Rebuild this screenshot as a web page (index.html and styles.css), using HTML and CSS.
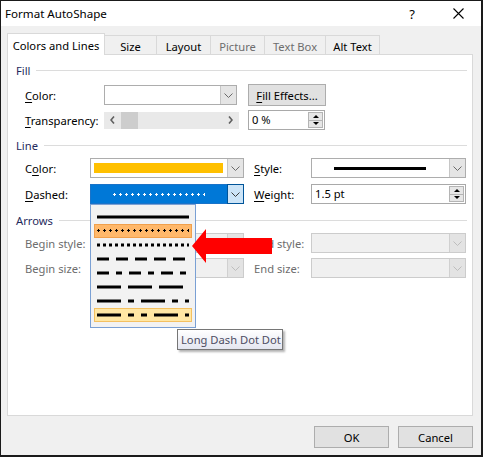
FILE: index.html
```html
<!DOCTYPE html>
<html lang="en">
<head>
<meta charset="utf-8">
<title>Format AutoShape</title>
<link rel="stylesheet" href="styles.css">
</head>
<body>
<div class="window">
  <div class="titlebar">
    <span class="title">Format AutoShape</span>
    <span class="tb-btn help">?</span>
    <span class="tb-btn close"><svg width="11" height="11" viewBox="0 0 11 11"><path d="M0.5 0.5L10.5 10.5M10.5 0.5L0.5 10.5" stroke="#000" stroke-width="1.1"/></svg></span>
  </div>

  <div class="tabs">
    <div class="tab active">Colors and Lines</div>
    <div class="tab t-size">Size</div>
    <div class="tab t-layout">Layout</div>
    <div class="tab t-picture disabled">Picture</div>
    <div class="tab t-textbox disabled">Text Box</div>
    <div class="tab t-alt">Alt Text</div>
  </div>

  <div class="panel">
    <div class="group-head g-fill"><span>Fill</span></div>
    <div class="row r1">
      <span class="lbl lbl-fill"><u>C</u>olor:</span>
      <div class="combo c133"><div class="field"></div><div class="drop"><svg class="chev" width="9" height="5" viewBox="0 0 9 5"><polyline points="0.5,0.5 4.5,4.5 8.5,0.5" fill="none" stroke="#6a6a6a" stroke-width="1"/></svg></div></div>
      <div class="btn fill-effects"><span><u>F</u>ill Effects...</span></div>
    </div>
    <div class="row r2">
      <span class="lbl lbl-fill"><u>T</u>ransparency:</span>
      <div class="scroll">
        <div class="sbtn"><svg width="5" height="8" viewBox="0 0 5 8"><polyline points="4,0.5 1,4 4,7.5" fill="none" stroke="#606060" stroke-width="1.6"/></svg></div>
        <div class="thumb"></div>
        <div class="strack"></div>
        <div class="sbtn"><svg width="5" height="8" viewBox="0 0 5 8"><polyline points="1,0.5 4,4 1,7.5" fill="none" stroke="#606060" stroke-width="1.6"/></svg></div>
      </div>
      <div class="spin s77"><span class="spin-val">0 %</span><div class="spin-btns"><div class="sb"><i class="up"></i></div><div class="sb"><i class="down"></i></div></div></div>
    </div>

    <div class="group-head g-line"><span>Line</span></div>
    <div class="row r3">
      <span class="lbl lbl-line">C<u>o</u>lor:</span>
      <div class="combo c154"><div class="field"><div class="swatch"></div></div><div class="drop"><svg class="chev" width="9" height="5" viewBox="0 0 9 5"><polyline points="0.5,0.5 4.5,4.5 8.5,0.5" fill="none" stroke="#6a6a6a" stroke-width="1"/></svg></div></div>
      <span class="lbl lbl-right"><u>S</u>tyle:</span>
      <div class="combo c155"><div class="field center"><div class="solid"></div></div><div class="drop"><svg class="chev" width="9" height="5" viewBox="0 0 9 5"><polyline points="0.5,0.5 4.5,4.5 8.5,0.5" fill="none" stroke="#6a6a6a" stroke-width="1"/></svg></div></div>
    </div>
    <div class="row r4">
      <span class="lbl lbl-line"><u>D</u>ashed:</span>
      <div class="combo c154 open"><div class="field center">
        <svg width="92" height="7" viewBox="0 0 92 7"><defs><pattern id="pw" x="0" y="0" width="6" height="7" patternUnits="userSpaceOnUse"><rect x="0" y="3" width="3" height="1" fill="#fff"/><rect x="1" y="2" width="1" height="3" fill="#fff"/></pattern></defs><rect x="0" y="0" width="92" height="7" fill="url(#pw)"/></svg>
      </div><div class="drop"><svg class="chev" width="9" height="5" viewBox="0 0 9 5"><polyline points="0.5,0.5 4.5,4.5 8.5,0.5" fill="none" stroke="#3a3a3a" stroke-width="1"/></svg></div></div>
      <span class="lbl lbl-right"><u>W</u>eight:</span>
      <div class="spin s155"><span class="spin-val">1.5 pt</span><div class="spin-btns"><div class="sb"><i class="up"></i></div><div class="sb"><i class="down"></i></div></div></div>
    </div>

    <div class="group-head g-arrows"><span>Arrows</span></div>
    <div class="row r5">
      <span class="lbl lbl-line disabled">Begin style:</span>
      <div class="combo c154 dis"><div class="field"></div><div class="drop"><svg class="chev" width="9" height="5" viewBox="0 0 9 5"><polyline points="0.5,0.5 4.5,4.5 8.5,0.5" fill="none" stroke="#bdbdbd" stroke-width="1"/></svg></div></div>
      <span class="lbl lbl-right disabled">End style:</span>
      <div class="combo c155 dis"><div class="field"></div><div class="drop"><svg class="chev" width="9" height="5" viewBox="0 0 9 5"><polyline points="0.5,0.5 4.5,4.5 8.5,0.5" fill="none" stroke="#bdbdbd" stroke-width="1"/></svg></div></div>
    </div>
    <div class="row r6">
      <span class="lbl lbl-line disabled">Begin size:</span>
      <div class="combo c154 dis"><div class="field"></div><div class="drop"><svg class="chev" width="9" height="5" viewBox="0 0 9 5"><polyline points="0.5,0.5 4.5,4.5 8.5,0.5" fill="none" stroke="#bdbdbd" stroke-width="1"/></svg></div></div>
      <span class="lbl lbl-right disabled">End size:</span>
      <div class="combo c155 dis"><div class="field"></div><div class="drop"><svg class="chev" width="9" height="5" viewBox="0 0 9 5"><polyline points="0.5,0.5 4.5,4.5 8.5,0.5" fill="none" stroke="#bdbdbd" stroke-width="1"/></svg></div></div>
    </div>
  </div>

  <div class="footer">
    <div class="btn dlg">OK</div>
    <div class="btn dlg">Cancel</div>
  </div>

  <div class="dash-list">
    <div class="item"><svg width="98" height="14" viewBox="0 0 98 14"><line x1="3" y1="7" x2="95" y2="7" stroke="#000" stroke-width="3"/></svg></div>
    <div class="item sel"><svg width="98" height="14" viewBox="0 0 98 14"><defs><pattern id="pb" x="3" y="0" width="6" height="14" patternUnits="userSpaceOnUse"><rect x="0" y="6" width="3" height="1" fill="#000"/><rect x="1" y="5" width="1" height="3" fill="#000"/></pattern></defs><rect x="3" y="0" width="92" height="14" fill="url(#pb)"/></svg></div>
    <div class="item"><svg width="98" height="14" viewBox="0 0 98 14"><line x1="3" y1="7" x2="95" y2="7" stroke="#000" stroke-width="3" stroke-dasharray="3 3"/></svg></div>
    <div class="item"><svg width="98" height="14" viewBox="0 0 98 14"><line x1="3" y1="7" x2="95" y2="7" stroke="#000" stroke-width="3" stroke-dasharray="12 7"/></svg></div>
    <div class="item"><svg width="98" height="14" viewBox="0 0 98 14"><line x1="3" y1="7" x2="95" y2="7" stroke="#000" stroke-width="3" stroke-dasharray="12 7 6 7"/></svg></div>
    <div class="item"><svg width="98" height="14" viewBox="0 0 98 14"><line x1="3" y1="7" x2="95" y2="7" stroke="#000" stroke-width="3" stroke-dasharray="24 7"/></svg></div>
    <div class="item"><svg width="98" height="14" viewBox="0 0 98 14"><line x1="3" y1="7" x2="95" y2="7" stroke="#000" stroke-width="3" stroke-dasharray="24 7 6 7"/></svg></div>
    <div class="item hover"><svg width="98" height="14" viewBox="0 0 98 14"><line x1="3" y1="7" x2="95" y2="7" stroke="#000" stroke-width="3" stroke-dasharray="24 7 6 7 6 7"/></svg></div>
  </div>

  <svg class="red-arrow" width="84" height="38" viewBox="0 0 84 38"><polygon points="2,19 16,2 16,11 82,11 82,27 16,27 16,36" fill="#ff0000"/></svg>

  <div class="tooltip">Long Dash Dot Dot</div>
</div>
</body>
</html>
```
FILE: styles.css
```css
* { box-sizing: border-box; }
html, body { margin: 0; padding: 0; background: #fff; }
body {
  font-family: "Segoe UI", "Noto Sans", sans-serif;
  font-size: 11.2px;
  color: #000;
}
u { text-decoration: underline; text-underline-offset: 2px; }

.window {
  position: relative;
  width: 483px;
  height: 457px;
  border: 1px solid #1a1a1a;
  border-right-width: 2px;
  border-bottom-width: 2px;
  background: #f0f0f0;
  display: flex;
  flex-direction: column;
  overflow: hidden;
}

/* title bar */
.titlebar {
  height: 25px;
  background: #fff;
  display: flex;
  align-items: center;
  flex-shrink: 0;
}
.title { flex: 1; padding-left: 4px; line-height: 25px; font-size: 11.6px; }
.tb-btn {
  width: 46px; height: 25px;
  display: flex; align-items: center; justify-content: center;
}
.help { font-size: 13px; }

/* tabs */
.tabs {
  margin-top: 7px;
  height: 21px;
  display: flex;
  align-items: flex-end;
  padding-left: 6px;
  flex-shrink: 0;
}
.tab {
  height: 19px;
  border: 1px solid #d9d9d9;
  border-bottom: none;
  background: #f0f0f0;
  display: flex; align-items: center; justify-content: center;
  margin-left: -1px;
  padding-top: 2px;
}
.tab.active {
  height: 22px;
  width: 98px;
  background: #fff;
  margin-bottom: -1px;
  margin-left: 0;
  position: relative;
  z-index: 1;
  padding-top: 1px;
}
.t-size { width: 53px; }
.t-layout { width: 55px; }
.t-picture { width: 55px; }
.t-textbox { width: 62px; }
.t-alt { width: 55px; }
.disabled { color: #6d6d6d; }

/* panel */
.panel {
  margin-left: 6px;
  width: 466px;
  height: 362px;
  background: #fff;
  border: 1px solid #d9d9d9;
  flex-shrink: 0;
}
.group-head {
  height: 16px;
  display: flex;
  align-items: center;
  padding: 0 5px 0 8px;
  color: #1f2a5c;
}
.group-head::after {
  content: "";
  flex: 1;
  height: 1px;
  background: #dcdcdc;
  margin-left: 6px;
}
.g-fill { margin-top: 7px; }
.g-line { margin-top: 6px; }
.g-arrows { margin-top: 7px; }

.row {
  height: 22px;
  display: flex;
  align-items: center;
  padding-left: 17px;
}
.r1 { margin-top: 6px; }
.r2 { margin-top: 3px; }
.r3 { margin-top: 4px; }
.r4 { margin-top: 4px; }
.r5 { margin-top: 4px; }
.r6 { margin-top: 3px; }

.lbl { flex-shrink: 0; white-space: nowrap; }
.lbl-fill { width: 79px; }
.lbl-line { width: 65px; }
.lbl-right { width: 57px; margin-left: 10px; }

/* combos */
.combo {
  height: 20px;
  display: flex;
  border: 1px solid #adadad;
  background: #fff;
  flex-shrink: 0;
}
.c133 { width: 133px; }
.c154 { width: 154px; }
.c155 { width: 155px; }
.combo .field { flex: 1; display: flex; align-items: center; }
.combo .field.center { justify-content: center; }
.combo .drop {
  width: 16px;
  background: #e5e5e5;
  border-left: 1px solid #c6c6c6;
  display: flex; align-items: center; justify-content: center;
}
.swatch {
  flex: 1;
  height: 10px;
  margin: 0 4px 0 3px;
  background: #ffc000;
}
.solid { width: 92px; height: 3px; background: #000; margin-left: -2px; }

.combo.open { border-color: #1a73c8; }
.combo.open .field { background: #0078d7; }
.combo.open .drop {
  width: 17px;
  background: #cce4f7;
  border: 1px solid #005499;
  margin: -1px -1px -1px 0;
  height: 20px;
}

.combo.dis { border-color: #cccccc; background: #f0f0f0; }
.combo.dis .drop { background: #e3e3e3; border-left-color: #d0d0d0; }

/* buttons */
.btn {
  background: #e1e1e1;
  border: 1px solid #adadad;
  display: flex; align-items: center; justify-content: center;
  flex-shrink: 0;
}
.fill-effects { width: 78px; height: 22px; margin-left: 11px; }

/* scrollbar */
.scroll {
  width: 135px;
  height: 17px;
  background: #e9e9e9;
  display: flex;
  flex-shrink: 0;
}
.sbtn { width: 17px; display: flex; align-items: center; justify-content: center; }
.thumb { width: 17px; background: #cdcdcd; }
.strack { flex: 1; }

/* spin */
.spin {
  height: 20px;
  border: 1px solid #a9a9a9;
  background: #fff;
  display: flex;
  align-items: stretch;
  flex-shrink: 0;
}
.s77 { width: 77px; margin-left: 9px; }
.s155 { width: 155px; }
.spin-val { flex: 1; padding-left: 3px; line-height: 18px; }
.spin-btns {
  width: 15px;
  margin: 1px 1px 1px 0;
  display: flex;
  flex-direction: column;
}
.sb {
  flex: 1;
  background: #e6e6e6;
  border: 1px solid #b4b4b4;
  display: flex; align-items: center; justify-content: center;
}
.sb + .sb { border-top: none; }
.up {
  width: 0; height: 0;
  border-left: 3px solid transparent;
  border-right: 3px solid transparent;
  border-bottom: 3px solid #000;
}
.down {
  width: 0; height: 0;
  border-left: 3px solid transparent;
  border-right: 3px solid transparent;
  border-top: 3px solid #000;
}

/* footer */
.footer {
  display: flex;
  justify-content: flex-end;
  gap: 9px;
  padding-right: 8px;
  margin-top: 10px;
}
.dlg { width: 75px; height: 22px; }

/* overlays */
.dash-list {
  position: absolute;
  left: 89px;
  top: 203px;
  width: 106px;
  height: 124px;
  background: #f2f2f2;
  border: 1px solid #7aa0d4;
  padding: 5px 3px 0 3px;
  z-index: 5;
}
.item {
  width: 98px;
  height: 14px;
  border: 1px solid transparent;
  position: relative;
}
.item svg { position: absolute; left: -1px; top: -1px; display: block; }
.item.sel { background: #ffb86a; border-color: #f0a04c; }
.item.hover { background: #ffe7a4; border-color: #f4c060; }

.red-arrow {
  position: absolute;
  left: 189px;
  top: 226px;
  z-index: 6;
}

.tooltip {
  position: absolute;
  left: 176px;
  top: 328px;
  width: 106px;
  height: 21px;
  border: 1px solid #767676;
  background: linear-gradient(#ffffff, #e4e6f0);
  box-shadow: 2px 2px 2px rgba(0,0,0,0.3);
  color: #4d4d63;
  padding-left: 3px;
  line-height: 19px;
  white-space: nowrap;
  z-index: 7;
}
```
